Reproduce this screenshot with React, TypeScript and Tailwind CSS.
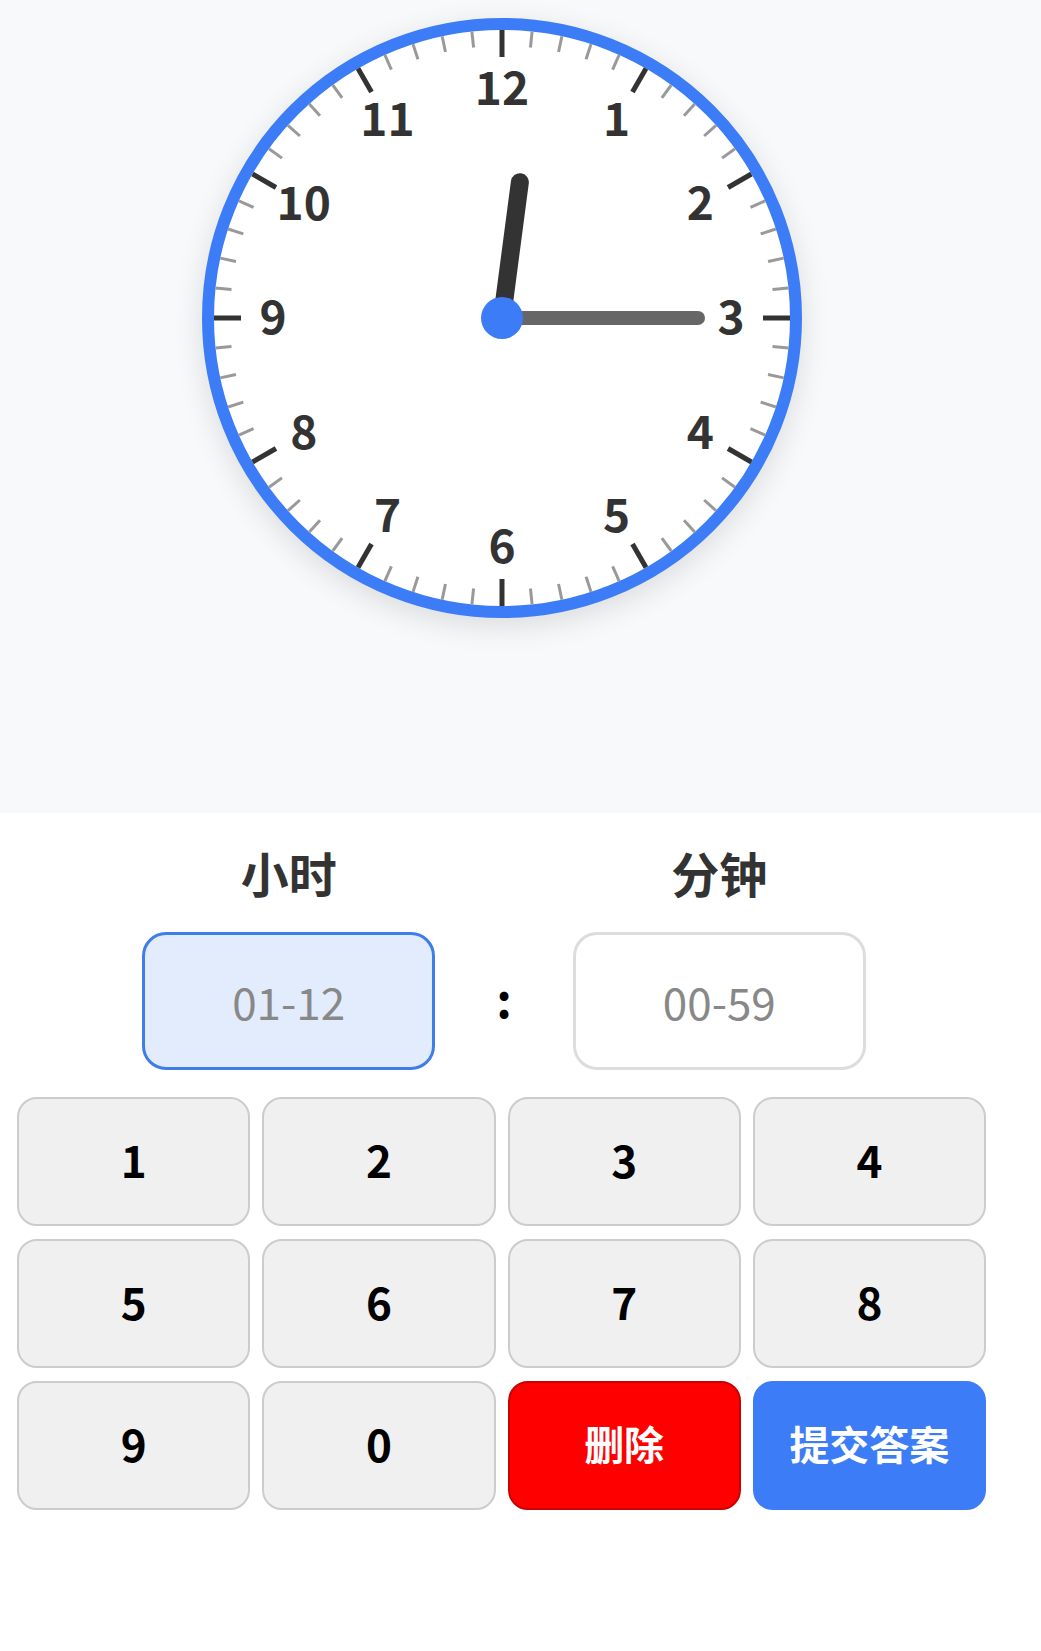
import React from "react";

const HOUR_LABELS = [12, 1, 2, 3, 4, 5, 6, 7, 8, 9, 10, 11];
const KEYS = ["1", "2", "3", "4", "5", "6", "7", "8", "9", "0"];

// hands for 12:15
const HOUR_ANGLE = 7.5;
const MINUTE_ANGLE = 90;

function polar(deg: number, r: number) {
  const a = (deg * Math.PI) / 180;
  return { x: Math.sin(a) * r, y: -Math.cos(a) * r };
}

function ClockFace() {
  const hourTip = polar(HOUR_ANGLE, 137);
  const minuteTip = polar(MINUTE_ANGLE, 196);

  return (
    <div className="h-[600px] w-[600px] rounded-full border-[12px] border-[#3d7cf7] bg-white shadow-[0_8px_30px_rgba(0,0,0,0.12)]">
      <svg viewBox="-288 -288 576 576" className="block h-full w-full">
        {Array.from({ length: 60 }, (_, i) => {
          const major = i % 5 === 0;
          const a = polar(i * 6, 288);
          const b = polar(i * 6, major ? 261 : 272);
          return (
            <line
              key={i}
              x1={a.x}
              y1={a.y}
              x2={b.x}
              y2={b.y}
              stroke={major ? "#333333" : "#999999"}
              strokeWidth={major ? 5 : 3}
            />
          );
        })}
        {HOUR_LABELS.map((n, i) => {
          const p = polar(i * 30, 229);
          return (
            <text
              key={n}
              x={p.x}
              y={p.y - 4}
              textAnchor="middle"
              dominantBaseline="central"
              fill="#333333"
              fontSize={46}
              fontWeight={700}
            >
              {n}
            </text>
          );
        })}
        <line
          x1={0}
          y1={0}
          x2={hourTip.x}
          y2={hourTip.y}
          stroke="#333333"
          strokeWidth={18}
          strokeLinecap="round"
        />
        <line
          x1={0}
          y1={0}
          x2={minuteTip.x}
          y2={minuteTip.y}
          stroke="#666666"
          strokeWidth={14}
          strokeLinecap="round"
        />
        <circle cx={0} cy={0} r={21} fill="#3d7cf7" />
      </svg>
    </div>
  );
}

function TimeField({
  label,
  placeholder,
  active,
}: {
  label: string;
  placeholder: string;
  active?: boolean;
}) {
  return (
    <div className="flex flex-col items-center">
      <h2 className="text-[48px] leading-[48px] font-bold text-[#333]">{label}</h2>
      <input
        readOnly
        placeholder={placeholder}
        className={
          active
            ? "mt-[36px] h-[138px] w-[293px] rounded-[24px] border-[3px] border-[#3f7de8] bg-[#e3ecfd] text-center text-[44px] text-[#333] outline-none placeholder:text-[#888]"
            : "mt-[36px] h-[138px] w-[293px] rounded-[24px] border-[3px] border-[#dddddd] bg-white text-center text-[44px] text-[#333] outline-none placeholder:text-[#888]"
        }
      />
    </div>
  );
}

export default function App() {
  return (
    <div className="min-h-[1651px] bg-white font-['Noto_Sans_CJK_SC',sans-serif]">
      <section className="h-[813px] bg-[#f8f9fa] pt-[18px]">
        <div className="flex w-[1003px] justify-center">
          <ClockFace />
        </div>
      </section>

      <section className="w-[1003px] pt-[35px]">
        <div className="flex items-end justify-center gap-[61px] pl-[5px]">
          <TimeField label="小时" placeholder="01-12" active />
          <div className="flex h-[138px] items-center pb-[8px] text-[48px] font-bold text-black">:</div>
          <TimeField label="分钟" placeholder="00-59" />
        </div>

        <div className="mt-[27px] grid grid-cols-4 gap-x-3 gap-y-[13px] px-[17px]">
          {KEYS.map((k) => (
            <button
              key={k}
              className="h-[129px] rounded-[20px] border-2 border-[#cccccc] bg-[#f0f0f0] pb-[6px] text-[44px] font-bold text-black"
            >
              {k}
            </button>
          ))}
          <button className="h-[129px] rounded-[20px] border-2 border-[#cc0000] bg-[#ff0000] pb-[6px] text-[40px] font-bold text-white">
            删除
          </button>
          <button className="h-[129px] rounded-[20px] border-2 border-[#3d7cf7] bg-[#3d7cf7] pb-[6px] text-[40px] font-bold text-white">
            提交答案
          </button>
        </div>
      </section>
    </div>
  );
}
